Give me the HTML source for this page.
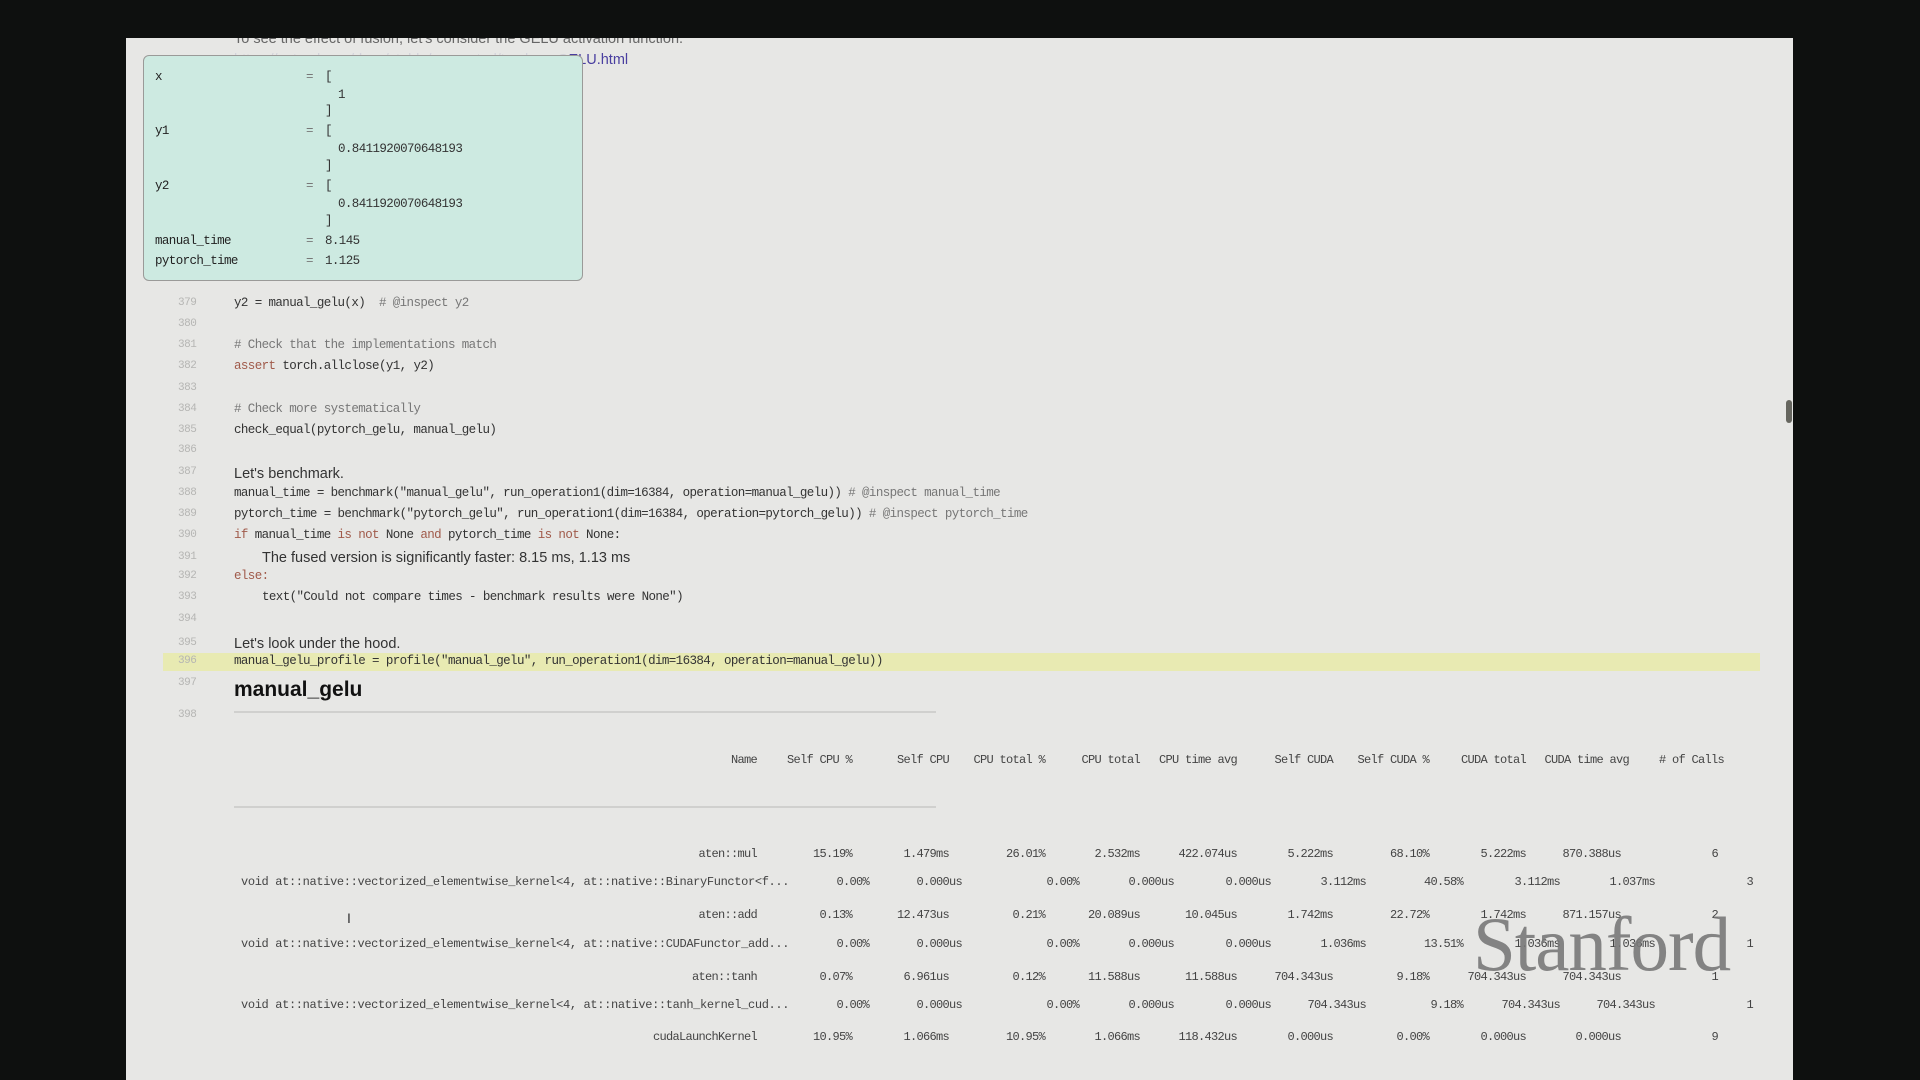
<!DOCTYPE html>
<html><head><meta charset="utf-8"><style>
*{margin:0;padding:0;box-sizing:border-box}
body{width:1920px;height:1080px;background:#0e100f;position:relative;overflow:hidden;font-family:"Liberation Sans",sans-serif}
#pg{position:absolute;left:126px;top:38px;width:1667px;height:1042px;background:#e7e7e5;overflow:hidden}
#in{position:absolute;left:0;top:2px;width:1667px;height:1042px}
.a{position:absolute;white-space:pre}
.m{font-family:"Liberation Mono",monospace;font-size:12.5px;letter-spacing:-0.6px;color:#333}
.ln{font-family:"Liberation Mono",monospace;font-size:11px;color:#b5b5b3;letter-spacing:-0.5px}
.t{font-size:14.5px;color:#333}
.k{color:#a05a4a}
.c{color:#777}
.v{font-family:"Liberation Mono",monospace;font-size:12px;letter-spacing:-0.35px;color:#444}
.r{position:absolute;white-space:pre;font-family:"Liberation Mono",monospace;font-size:12px;letter-spacing:-0.7px;color:#444;transform:translateX(-100%)}
</style></head><body>
<div id="pg"><div id="in">
<div class="a t" style="left:108px;top:-9px;color:#666">To see the effect of fusion, let's consider the GELU activation function.</div>
<div class="a t" style="left:108px;top:12px;color:#4a3fa0"><span style="color:#d2d2da">https://pytorch.org/docs/stable/generated/torch.nn.G</span>ELU.html</div>
<div style="position:absolute;left:17px;top:15px;width:440px;height:226px;background:#cdeae1;border:1px solid #9a9a98;border-radius:6px"></div>
<div class="a m" style="left:29px;top:30px;color:#222">x</div>
<div class="a m" style="left:180px;top:30px;color:#777">=</div><div class="a m" style="left:199px;top:30px">[</div>
<div class="a m" style="left:212px;top:48px">1</div>
<div class="a m" style="left:199px;top:64px">]</div>
<div class="a m" style="left:29px;top:84px;color:#222">y1</div><div class="a m" style="left:180px;top:84px;color:#777">=</div><div class="a m" style="left:199px;top:84px">[</div>
<div class="a m" style="left:212px;top:102px">0.8411920070648193</div>
<div class="a m" style="left:199px;top:119px">]</div>
<div class="a m" style="left:29px;top:139px;color:#222">y2</div><div class="a m" style="left:180px;top:139px;color:#777">=</div><div class="a m" style="left:199px;top:139px">[</div>
<div class="a m" style="left:212px;top:157px">0.8411920070648193</div>
<div class="a m" style="left:199px;top:174px">]</div>
<div class="a m" style="left:29px;top:194px;color:#222">manual_time</div><div class="a m" style="left:180px;top:194px;color:#777">=</div><div class="a m" style="left:199px;top:194px">8.145</div>
<div class="a m" style="left:29px;top:214px;color:#222">pytorch_time</div><div class="a m" style="left:180px;top:214px;color:#777">=</div><div class="a m" style="left:199px;top:214px">1.125</div>

<div style="position:absolute;left:37px;top:613px;width:1597px;height:18px;background:#e8eab2"></div>

<div class="a ln" style="left:52px;top:257px">379</div><div class="a m" style="left:108px;top:256px">y2 = manual_gelu(x)  <span class="c"># @inspect y2</span></div>
<div class="a ln" style="left:52px;top:278px">380</div>
<div class="a ln" style="left:52px;top:299px">381</div><div class="a m c" style="left:108px;top:298px"># Check that the implementations match</div>
<div class="a ln" style="left:52px;top:320px">382</div><div class="a m" style="left:108px;top:319px"><span class="k">assert</span> torch.allclose(y1, y2)</div>
<div class="a ln" style="left:52px;top:342px">383</div>
<div class="a ln" style="left:52px;top:363px">384</div><div class="a m c" style="left:108px;top:362px"># Check more systematically</div>
<div class="a ln" style="left:52px;top:384px">385</div><div class="a m" style="left:108px;top:383px">check_equal(pytorch_gelu, manual_gelu)</div>
<div class="a ln" style="left:52px;top:404px">386</div>
<div class="a ln" style="left:52px;top:426px">387</div><div class="a t" style="left:108px;top:426px">Let's benchmark.</div>
<div class="a ln" style="left:52px;top:447px">388</div><div class="a m" style="left:108px;top:446px">manual_time = benchmark("manual_gelu", run_operation1(dim=16384, operation=manual_gelu)) <span class="c"># @inspect manual_time</span></div>
<div class="a ln" style="left:52px;top:468px">389</div><div class="a m" style="left:108px;top:467px">pytorch_time = benchmark("pytorch_gelu", run_operation1(dim=16384, operation=pytorch_gelu)) <span class="c"># @inspect pytorch_time</span></div>
<div class="a ln" style="left:52px;top:489px">390</div><div class="a m" style="left:108px;top:488px"><span class="k">if</span> manual_time <span class="k">is not</span> None <span class="k">and</span> pytorch_time <span class="k">is not</span> None:</div>
<div class="a ln" style="left:52px;top:511px">391</div><div class="a t" style="left:136px;top:510px">The fused version is significantly faster: 8.15 ms, 1.13 ms</div>
<div class="a ln" style="left:52px;top:530px">392</div><div class="a m k" style="left:108px;top:529px">else:</div>
<div class="a ln" style="left:52px;top:551px">393</div><div class="a m" style="left:136px;top:550px">text("Could not compare times - benchmark results were None")</div>
<div class="a ln" style="left:52px;top:573px">394</div>
<div class="a ln" style="left:52px;top:597px">395</div><div class="a t" style="left:108px;top:596px">Let's look under the hood.</div>
<div class="a ln" style="left:52px;top:615px">396</div><div class="a m" style="left:108px;top:614px">manual_gelu_profile = profile("manual_gelu", run_operation1(dim=16384, operation=manual_gelu))</div>
<div class="a ln" style="left:52px;top:637px">397</div><div class="a" style="left:108px;top:638px;font-size:21px;font-weight:bold;color:#111">manual_gelu</div>
<div class="a ln" style="left:52px;top:669px">398</div>
<div style="position:absolute;left:108px;top:671px;width:702px;height:2px;background:#d0d0ce"></div>
<div style="position:absolute;left:108px;top:766px;width:702px;height:2px;background:#d0d0ce"></div>

<div style="position:absolute;left:0;top:0">
<div class="r" style="left:631px;top:713px">Name</div><div class="r" style="left:726px;top:713px">Self CPU %</div><div class="r" style="left:823px;top:713px">Self CPU</div><div class="r" style="left:919px;top:713px">CPU total %</div><div class="r" style="left:1014px;top:713px">CPU total</div><div class="r" style="left:1111px;top:713px">CPU time avg</div><div class="r" style="left:1207px;top:713px">Self CUDA</div><div class="r" style="left:1303px;top:713px">Self CUDA %</div><div class="r" style="left:1400px;top:713px">CUDA total</div><div class="r" style="left:1503px;top:713px">CUDA time avg</div><div class="r" style="left:1598px;top:713px"># of Calls</div>

<div class="r" style="left:631px;top:807px">aten::mul</div><div class="r" style="left:726px;top:807px">15.19%</div><div class="r" style="left:823px;top:807px">1.479ms</div><div class="r" style="left:919px;top:807px">26.01%</div><div class="r" style="left:1014px;top:807px">2.532ms</div><div class="r" style="left:1111px;top:807px">422.074us</div><div class="r" style="left:1207px;top:807px">5.222ms</div><div class="r" style="left:1303px;top:807px">68.10%</div><div class="r" style="left:1400px;top:807px">5.222ms</div><div class="r" style="left:1495px;top:807px">870.388us</div><div class="r" style="left:1592px;top:807px">6</div>

<div class="a v" style="left:115px;top:835px">void at::native::vectorized_elementwise_kernel&lt;4, at::native::BinaryFunctor&lt;f...</div>
<div class="r" style="left:743px;top:835px">0.00%</div><div class="r" style="left:836px;top:835px">0.000us</div><div class="r" style="left:953px;top:835px">0.00%</div><div class="r" style="left:1048px;top:835px">0.000us</div><div class="r" style="left:1145px;top:835px">0.000us</div><div class="r" style="left:1240px;top:835px">3.112ms</div><div class="r" style="left:1337px;top:835px">40.58%</div><div class="r" style="left:1434px;top:835px">3.112ms</div><div class="r" style="left:1529px;top:835px">1.037ms</div><div class="r" style="left:1627px;top:835px">3</div>

<div class="r" style="left:631px;top:868px">aten::add</div><div class="r" style="left:726px;top:868px">0.13%</div><div class="r" style="left:823px;top:868px">12.473us</div><div class="r" style="left:919px;top:868px">0.21%</div><div class="r" style="left:1014px;top:868px">20.089us</div><div class="r" style="left:1111px;top:868px">10.045us</div><div class="r" style="left:1207px;top:868px">1.742ms</div><div class="r" style="left:1303px;top:868px">22.72%</div><div class="r" style="left:1400px;top:868px">1.742ms</div><div class="r" style="left:1495px;top:868px">871.157us</div><div class="r" style="left:1592px;top:868px">2</div>

<div class="a v" style="left:115px;top:897px">void at::native::vectorized_elementwise_kernel&lt;4, at::native::CUDAFunctor_add...</div>
<div class="r" style="left:743px;top:897px">0.00%</div><div class="r" style="left:836px;top:897px">0.000us</div><div class="r" style="left:953px;top:897px">0.00%</div><div class="r" style="left:1048px;top:897px">0.000us</div><div class="r" style="left:1145px;top:897px">0.000us</div><div class="r" style="left:1240px;top:897px">1.036ms</div><div class="r" style="left:1337px;top:897px">13.51%</div><div class="r" style="left:1434px;top:897px">1.036ms</div><div class="r" style="left:1529px;top:897px">1.036ms</div><div class="r" style="left:1627px;top:897px">1</div>

<div class="r" style="left:631px;top:930px">aten::tanh</div><div class="r" style="left:726px;top:930px">0.07%</div><div class="r" style="left:823px;top:930px">6.961us</div><div class="r" style="left:919px;top:930px">0.12%</div><div class="r" style="left:1014px;top:930px">11.588us</div><div class="r" style="left:1111px;top:930px">11.588us</div><div class="r" style="left:1207px;top:930px">704.343us</div><div class="r" style="left:1303px;top:930px">9.18%</div><div class="r" style="left:1400px;top:930px">704.343us</div><div class="r" style="left:1495px;top:930px">704.343us</div><div class="r" style="left:1592px;top:930px">1</div>

<div class="a v" style="left:115px;top:958px">void at::native::vectorized_elementwise_kernel&lt;4, at::native::tanh_kernel_cud...</div>
<div class="r" style="left:743px;top:958px">0.00%</div><div class="r" style="left:836px;top:958px">0.000us</div><div class="r" style="left:953px;top:958px">0.00%</div><div class="r" style="left:1048px;top:958px">0.000us</div><div class="r" style="left:1145px;top:958px">0.000us</div><div class="r" style="left:1240px;top:958px">704.343us</div><div class="r" style="left:1337px;top:958px">9.18%</div><div class="r" style="left:1434px;top:958px">704.343us</div><div class="r" style="left:1529px;top:958px">704.343us</div><div class="r" style="left:1627px;top:958px">1</div>

<div class="r" style="left:631px;top:990px">cudaLaunchKernel</div><div class="r" style="left:726px;top:990px">10.95%</div><div class="r" style="left:823px;top:990px">1.066ms</div><div class="r" style="left:919px;top:990px">10.95%</div><div class="r" style="left:1014px;top:990px">1.066ms</div><div class="r" style="left:1111px;top:990px">118.432us</div><div class="r" style="left:1207px;top:990px">0.000us</div><div class="r" style="left:1303px;top:990px">0.00%</div><div class="r" style="left:1400px;top:990px">0.000us</div><div class="r" style="left:1495px;top:990px">0.000us</div><div class="r" style="left:1592px;top:990px">9</div>
</div>

<div class="a" style="left:221px;top:870px;font-size:14px;color:#333">I</div>
<div class="a" style="left:1347px;top:860px;font-family:'Liberation Serif',serif;font-size:77px;color:rgba(120,120,120,0.9);letter-spacing:-1px">Stanford</div>
</div>
<div style="position:absolute;left:1660px;top:362px;width:6px;height:23px;background:#66665f;border-radius:3px"></div>
</div>
</body></html>
